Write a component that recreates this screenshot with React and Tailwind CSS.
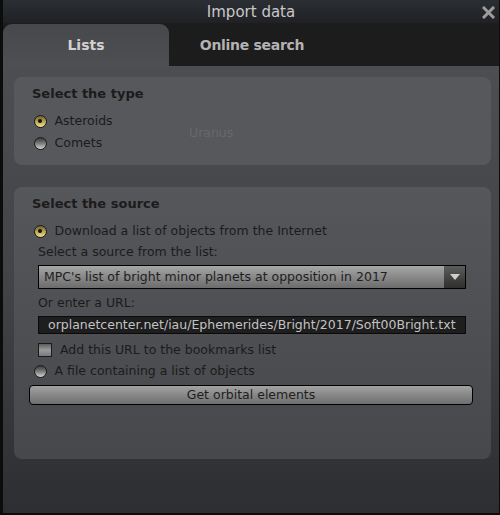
import React from "react";

const font = { fontFamily: '"DejaVu Sans", "Liberation Sans", sans-serif' };

function Radio({ checked }) {
  return (
    <span
      className={
        "relative inline-block w-[13px] h-[13px] rounded-full border border-[#1a1a1a] shrink-0 " +
        (checked
          ? "bg-gradient-to-b from-[#6e6030] via-[#b9a552] to-[#f2e08a]"
          : "bg-gradient-to-b from-[#3a3a3a] via-[#7d7d7d] to-[#d4d4d4]")
      }
    >
      {checked && (
        <span className="absolute left-[3.5px] top-[3.5px] w-[4px] h-[4px] rounded-full bg-[#111]" />
      )}
    </span>
  );
}

export default function App() {
  return (
    <div
      style={font}
      className="w-[500px] h-[515px] flex flex-col bg-black border-l-[3px] border-r border-b-2 border-[#0c0c0c] overflow-hidden"
    >
      {/* Title bar */}
      <div className="relative h-[23px] shrink-0 flex items-center justify-center bg-gradient-to-b from-[#2b2e33] to-[#1f2124]">
        <span className="text-[15px] text-[#c9c9c9] leading-none mt-[1px]">Import data</span>
        <svg
          className="absolute right-[4px] top-[6px]"
          width="13"
          height="13"
          viewBox="0 0 13 13"
        >
          <path d="M2 2 L11 11 M11 2 L2 11" stroke="#9d9d9d" strokeWidth="3" strokeLinecap="square" />
        </svg>
      </div>

      {/* Tab bar */}
      <div className="h-[43px] shrink-0 flex items-end bg-[#1c1c1c]">
        <div className="w-[166px] h-[42px] rounded-t-[9px] bg-gradient-to-b from-[#47484b] to-[#4e4f53] flex items-center justify-center">
          <span className="text-[14px] font-bold text-[#d2d2d2] mt-[1px]">Lists</span>
        </div>
        <div className="w-[166px] h-[42px] flex items-center justify-center">
          <span className="text-[14px] font-bold text-[#b3b3b3] tracking-[-0.3px] mt-[1px]">Online search</span>
        </div>
      </div>

      {/* Content */}
      <div className="flex-1 bg-gradient-to-b from-[#4d4e52] via-[#424347] to-[#2d2e31] pt-[11px] pl-[11px] pr-[8px] flex flex-col gap-[22px]">
        {/* Card 1 */}
        <div className="relative h-[88px] rounded-[8px] bg-[#57585c] pl-[18px] pt-[9px] text-[#1b1b1b]">
          <div className="text-[13px] font-bold leading-[16px]">Select the type</div>
          <div className="mt-[11px] flex items-center gap-[8px] pl-[1.5px] h-[16px]">
            <Radio checked />
            <span className="text-[12.5px]">Asteroids</span>
          </div>
          <div className="mt-[6px] flex items-center gap-[8px] pl-[1.5px] h-[16px]">
            <Radio />
            <span className="text-[12.5px]">Comets</span>
          </div>
          <span className="absolute left-[175px] top-[47px] text-[12.5px] text-[#67686c]">Uranus</span>
        </div>

        {/* Card 2 */}
        <div className="h-[272px] rounded-[8px] bg-gradient-to-b from-[#56575b] to-[#47484b] pl-[18px] pt-[9px] text-[#1b1b1b]">
          <div className="text-[13px] font-bold leading-[16px]">Select the source</div>
          <div className="mt-[11px] flex items-center gap-[8px] pl-[1.5px] h-[16px]">
            <Radio checked />
            <span className="text-[12.5px]">Download a list of objects from the Internet</span>
          </div>
          <div className="mt-[5px] pl-[6px] text-[12.5px] leading-[16px]">Select a source from the list:</div>
          <div className="mt-[5px] ml-[6px] w-[428px] h-[24px] border border-black flex bg-gradient-to-b from-[#a6a6a6] to-[#6c6c6c]">
            <div className="flex-1 flex items-center pl-[5px] text-[12.5px] text-[#1e1e1e]">
              MPC's list of bright minor planets at opposition in 2017
            </div>
            <div className="w-[21px] h-full bg-gradient-to-b from-[#5c5c5a] to-[#2f2f2d] flex items-center justify-center">
              <svg width="10" height="6" viewBox="0 0 10 6">
                <path d="M0 0 H10 L5 6 Z" fill="#cfcfcf" />
              </svg>
            </div>
          </div>
          <div className="mt-[6px] pl-[6px] text-[12.5px] leading-[16px]">Or enter a URL:</div>
          <div className="mt-[5px] ml-[6px] w-[428px] h-[18px] border border-[#0a0a0a] bg-[#1e1e1e] flex items-center pl-[9px] overflow-hidden whitespace-nowrap text-[12.5px] text-[#c2c2c2]">
            orplanetcenter.net/iau/Ephemerides/Bright/2017/Soft00Bright.txt
          </div>
          <div className="mt-[9px] ml-[6px] flex items-center gap-[8px] h-[14px]">
            <span className="w-[14px] h-[14px] border border-[#1a1a1a] bg-gradient-to-b from-[#5e5e5e] via-[#9a9a9a] to-[#7a7a7a] shrink-0" />
            <span className="text-[12.5px]">Add this URL to the bookmarks list</span>
          </div>
          <div className="mt-[6px] flex items-center gap-[8px] pl-[1.5px] h-[16px]">
            <Radio />
            <span className="text-[12.5px]">A file containing a list of objects</span>
          </div>
          <div className="mt-[6px] -ml-[3px] w-[444px] h-[20px] rounded-[4px] border border-black bg-gradient-to-b from-[#a2a2a2] to-[#6e6e6e] flex items-center justify-center text-[12.5px] text-[#1e1e1e]">
            Get orbital elements
          </div>
        </div>
      </div>
    </div>
  );
}
